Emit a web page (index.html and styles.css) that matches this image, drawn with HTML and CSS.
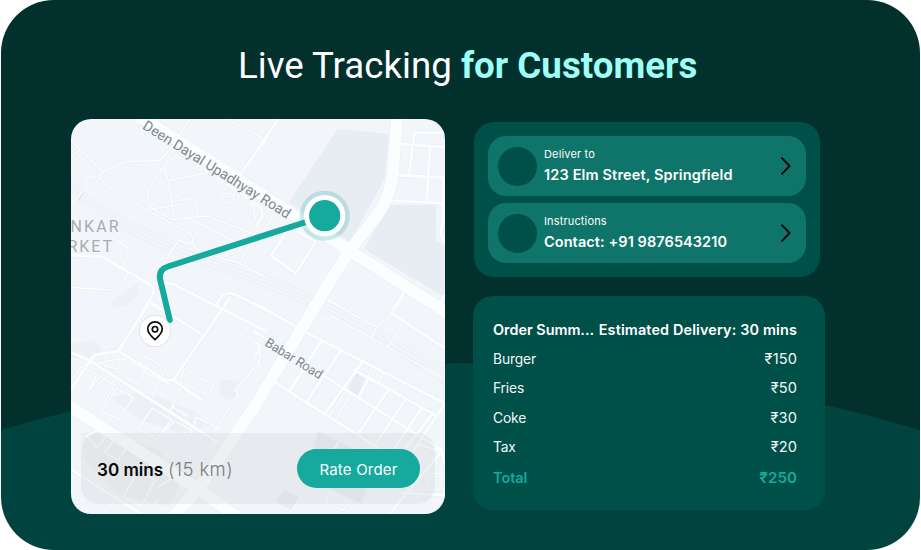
FILE: index.html
```
<!DOCTYPE html>
<html lang="en">
<head>
<meta charset="utf-8">
<title>Live Tracking for Customers</title>
<link rel="stylesheet" href="styles.css">
</head>
<body>
<main class="board">
  <h1 class="title">Live Tracking <strong>for Customers</strong></h1>
  <div class="columns">
    <section class="map-card">
      <svg class="map" viewBox="71 119 374 395" aria-hidden="true">
        <defs>
          <g id="minor">
            <g transform="translate(65 110) scale(.33333)">
              <path d="M18 90L112 185L178 155L283 152L320 112L375 27M22 135L48 118M18 155L65 207Q85 195 105 205L112 185M105 205Q130 235 170 257L365 365Q388 375 383 392Q377 400 390 412Q405 428 520 458L590 495M65 207L62 235L18 285M297 170Q315 138 350 145Q385 150 440 195L560 270L572 330L585 350L522 460M297 170L250 235Q243 270 258 294L320 328L425 318L600 385M297 170L310 215L328 325M310 212L425 188M318 275L388 263L400 318M258 298L318 287M370 325L520 400M468 257L482 278L506 277L508 256L485 248ZM340 390L305 448M340 390L370 402L383 392M490 27L600 90M560 285Q590 285 595 320L575 350M130 378L178 405Q195 415 188 435L175 462M18 533L148 540Q160 535 168 520L190 490"/>
            </g>
            <g transform="translate(255 110) scale(.33333)">
              <path d="M0 70L22 85M0 485L20 496M220 570L270 600M0 280L20 290Q28 310 8 340L0 350M55 315L15 378M0 580L40 600"/>
            </g>
            <g transform="translate(65 300) scale(.33333)">
              <path d="M20 240L50 200L95 225L75 262L35 238M100 190L155 178L178 175L240 210L218 252L158 215M178 175L155 208L103 190M225 192L240 168L302 205L288 230M240 215L288 240L262 290M288 240L318 255M345 245L430 285L445 255L358 205ZM55 290L105 230L150 255L105 325M155 265L205 292L160 358L110 332ZM220 385L262 325L320 358L275 420ZM298 395L328 362L382 392L348 450M320 320L368 348M385 380L395 352L465 388M452 388L520 285L510 270L585 185V165L560 150M525 102L580 130L585 165M318 330L345 265M65 408L105 385L125 405L98 445ZM120 458L160 402L192 430L160 480ZM175 590L220 510L270 540L230 618ZM280 560L330 530L365 590L320 640M20 500L120 560M120 640L155 590M600 285L490 445M250 640L280 600"/>
            </g>
            <g transform="translate(255 300) scale(.33333)">
              <path d="M220 0L350 75Q375 85 385 65L410 45L440 0M230 48L350 115L570 238M365 80L350 115M440 72L398 142M0 130Q20 130 15 150L0 160M0 175Q20 190 15 205L0 215M350 205L335 235M385 220L372 245M320 190L303 215M285 285L240 365M268 278L222 352M250 428L215 475M185 520L105 640M225 575L212 600L262 632L282 610M205 565L290 610M520 490V568M520 520H570"/>
            </g>
          </g>
          <g id="middle">
            <g transform="translate(65 110) scale(.33333)">
              <path d="M600 92L520 200M18 435L110 440L250 520Q270 530 265 550L235 600M290 515L330 525L600 662M455 590Q465 550 495 550Q520 555 600 600M250 575L290 600"/>
            </g>
            <g transform="translate(255 110) scale(.33333)">
              <path d="M70 27L0 130M570 68H478L462 195M440 102L570 112M525 115L515 275M425 195L570 203M418 272L560 280M565 205V330Q550 380 570 392M100 355L48 438L123 490L182 395L130 365M445 550L412 600M570 555L552 590"/>
            </g>
            <g transform="translate(65 300) scale(.33333)">
              <path d="M255 5L160 152L90 165L75 182L20 265M20 158L75 182L455 425M160 152L300 240H325L490 0M325 240L410 300M255 5L405 100M20 510L225 640"/>
            </g>
            <g transform="translate(255 300) scale(.33333)">
              <path d="M0 10L120 78M155 98L570 310M62 248L370 445M0 95L270 268L560 450M200 122L105 272M255 155L158 300M320 190L210 340M335 230L540 345M300 210L340 235L310 295M400 270L310 400M450 300L360 435M500 325L400 470M570 310L460 475M530 345L440 460M410 40L570 145M495 435L560 455L570 490M555 460L405 640M445 580L570 585"/>
            </g>
          </g>
          <g id="major">
            <path d="M142 118L255 190L358 256L446 312"/>
            <path d="M397 118L393 172C389 212 366 226 348 253L320 298L255 406L198 489L172 518"/>
            <path d="M66 404L198 489L240 519"/>
          </g>
        </defs>
        <rect x="71" y="119" width="374" height="395" fill="#f2f5fa"/>
        <g class="blocks">
          <path d="M338 129L389 134L384 180L350 242L289 202Z"/>
          <path d="M389 205L436 205V240L445 247V297L364 249Z"/>
          <path d="M318 431L375 459L362 504L306 477ZM284 489L300 498L292 510L275 502ZM357 373L365 378L358 396L346 391Z"/>
        </g>
        <g class="woods">
          <path d="M110 302L132 288L138 282V295L126 306L112 308ZM71 344L92 340L102 348L96 358H71ZM222 380H239L236 396L228 400L218 394ZM110 397L138 392L162 398L196 412L210 426L180 433L140 420ZM80 434L100 430L160 450L180 484L168 506L120 495L85 460Z"/>
        </g>
        <g class="rails">
          <path d="M71 181Q110 221 220 258T445 370"/><path d="M71 184Q112 226 222 263T445 375"/><path d="M71 187Q114 231 224 268T445 380"/><path d="M71 190Q114 236 226 273T445 385"/>
        </g>
        <path d="M78 200L84 190" stroke="#dfe5eb" stroke-width="3"/>
        <use href="#minor" class="edge minor-edge"/>
        <use href="#middle" class="edge middle-edge"/>
        <use href="#major" class="edge major-edge"/>
        <use href="#minor" class="lane minor-lane"/>
        <use href="#middle" class="lane middle-lane"/>
        <use href="#major" class="lane major-lane"/>
        <g class="road-names">
          <text transform="translate(141.800 128.300) rotate(32)" textLength="171">Deen Dayal Upadhyay Road</text>
          <text class="short" transform="translate(264 345) rotate(32)" textLength="65">Babar Road</text>
        </g>
        <g class="district">
          <text x="70.500" y="232" textLength="48">NKAR</text>
          <text x="67.500" y="251.700" textLength="44.500">RKET</text>
        </g>
        <path class="route" d="M320 217.500L168 266.500Q157.500 270 160.500 281L169.800 320"/>
        <circle cx="324.700" cy="215.700" r="25" fill="#16a99d" fill-opacity=".22"/>
        <circle cx="324.700" cy="215.700" r="20.700" fill="#fff"/>
        <circle cx="324.700" cy="215.700" r="15.600" fill="#16a99d"/>
        <circle cx="155" cy="331" r="15.800" fill="#fff" stroke="#e0dcdc" stroke-width=".9"/>
        <g class="pin">
          <path d="M155 339.700C151 336.200 147.800 332.500 147.800 329A7.200 7.200 0 0 1 162.200 329C162.200 332.500 159 336.200 155 339.700Z"/>
          <circle cx="155" cy="329.200" r="2.700"/>
        </g>
      </svg>
      <div class="eta">
        <p class="eta-text"><b>30 mins</b> <span>(15 km)</span></p>
        <button class="rate">Rate Order</button>
      </div>
    </section>
    <div class="side">
      <section class="details">
        <div class="detail">
          <i class="dot"></i>
          <div class="detail-text"><small>Deliver to</small><b>123 Elm Street, Springfield</b></div>
          <svg class="chevron" viewBox="0 0 10 18"><path d="M1 1.200L8.600 9L1 16.800"/></svg>
        </div>
        <div class="detail">
          <i class="dot"></i>
          <div class="detail-text"><small>Instructions</small><b class="phone">Contact: +91 9876543210</b></div>
          <svg class="chevron" viewBox="0 0 10 18"><path d="M1 1.200L8.600 9L1 16.800"/></svg>
        </div>
      </section>
      <section class="summary">
        <div class="line head"><span class="order">Order Summ...</span><span class="estimate">Estimated Delivery: 30 mins</span></div>
        <div class="line"><span>Burger</span><span class="price">₹150</span></div>
        <div class="line"><span>Fries</span><span class="price">₹50</span></div>
        <div class="line"><span>Coke</span><span class="price">₹30</span></div>
        <div class="line"><span>Tax</span><span class="price">₹20</span></div>
        <div class="line total"><span>Total</span><span class="price">₹250</span></div>
      </section>
    </div>
  </div>
</main>
</body>
</html>
```
FILE: styles.css
```
* { box-sizing: border-box; }
body { margin: 0; background: #fff; font-family: Inter, "Noto Sans", sans-serif; }
.board {
  height: 549.5px;
  margin: 0 1px;
  padding: 44px 0 0 70px;
  border-radius: 53px;
  overflow: hidden;
  background: radial-gradient(circle 1613px at 459.5px 1976px, #01443f 99.95%, #01302d 100%);
}
.title {
  margin: 0;
  padding-left: 167px;
  font: 400 36.7px/44px Roboto, sans-serif;
  color: #fff;
  white-space: nowrap;
}
.title strong { font-weight: 700; color: #9efff6; }
.columns { display: flex; align-items: flex-start; gap: 28px; margin-top: 31px; }
.map-card {
  position: relative;
  display: flex;
  flex-direction: column;
  justify-content: flex-end;
  width: 374px;
  height: 395px;
  padding: 10px;
  border-radius: 20px;
  overflow: hidden;
}
.map { position: absolute; inset: 0; width: 100%; height: 100%; }
.map path { fill: none; }
.map .blocks path { fill: #e8ecf3; }
.map .woods path { fill: #edf0f5; }
.rails path { stroke: #e9edf2; stroke-width: .7; }
.edge { stroke: #e7ecf2; stroke-linejoin: round; }
.lane { stroke: #fbfeff; stroke-linejoin: round; stroke-linecap: round; }
.minor-edge { stroke-width: 7.5px; }
.minor-lane { stroke-width: 4.8px; }
.middle-edge { stroke-width: 11.5px; }
.middle-lane { stroke-width: 9px; }
.major-edge { stroke-width: 13px; }
.major-lane { stroke-width: 12px; }
.road-names { font: 400 14.2px Roboto, sans-serif; fill: #81878c; }
.road-names .short { font-size: 13px; }
.district { font: 400 16px Roboto, sans-serif; fill: #a9adb1; }
.map .route { stroke: #16a99d; stroke-width: 6; stroke-linecap: round; }
.pin path, .pin circle { fill: none; stroke: #0b0b0b; stroke-width: 1.7; stroke-linejoin: round; }
.eta {
  position: relative;
  display: flex;
  align-items: center;
  justify-content: space-between;
  height: 71px;
  padding: 0 15px 0 16px;
  border-radius: 18px;
  background: rgba(204, 206, 208, .27);
}
.eta-text { margin: 0; font-size: 17.1px; white-space: nowrap; color: #080808; }
.eta-text b { font-weight: 600; }
.eta-text span { color: #7b7e80; font-size: 18.6px; font-weight: 300; letter-spacing: .35px; }
.rate {
  width: 123px;
  height: 39px;
  padding: 2px 0 0;
  border: 0;
  border-radius: 20px;
  background: #16a99d;
  color: #fff;
  font: 400 15px Inter, sans-serif;
  letter-spacing: .2px;
}
.side { padding-top: 3px; }
.details {
  display: grid;
  gap: 7px;
  width: 346px;
  height: 155px;
  margin-left: 1px;
  padding: 14px;
  border-radius: 20px;
  background: #00504a;
}
.detail {
  display: flex;
  align-items: center;
  height: 60px;
  padding: 0 15px 0 10px;
  border-radius: 18px;
  background: #0f7469;
}
.dot { width: 39px; height: 39px; border-radius: 50%; background: #00504a; }
.detail-text { flex: 1; margin: -2px 0 0 7px; color: #fff; white-space: nowrap; }
.detail-text small { display: block; font-size: 11px; line-height: 16px; letter-spacing: .15px; }
.detail-text b { display: block; margin-top: 3px; font-size: 14.5px; font-weight: 600; line-height: 20px; letter-spacing: .15px; }
.detail-text .phone { letter-spacing: .08px; }
.chevron { width: 10px; height: 18px; }
.chevron path { fill: none; stroke: #050505; stroke-width: 1.8; stroke-linecap: round; stroke-linejoin: round; }
.summary {
  width: 352px;
  height: 214px;
  margin-top: 19px;
  padding: 19px 28px 0 20px;
  border-radius: 20px;
  background: #00504a;
}
.line {
  display: flex;
  justify-content: space-between;
  font-size: 13.8px;
  line-height: 29.5px;
  letter-spacing: -.15px;
  color: #f2f8f7;
  white-space: nowrap;
}
.price { font-size: 14.6px; letter-spacing: .15px; margin-right: -.15px; }
.head { font-size: 14.4px; font-weight: 600; color: #fff; }
.order { letter-spacing: 0; }
.estimate { letter-spacing: .15px; }
.total { color: #16a99d; font-weight: 600; font-size: 14.4px; letter-spacing: 0; }
.total .price { font-size: 15px; }
```
